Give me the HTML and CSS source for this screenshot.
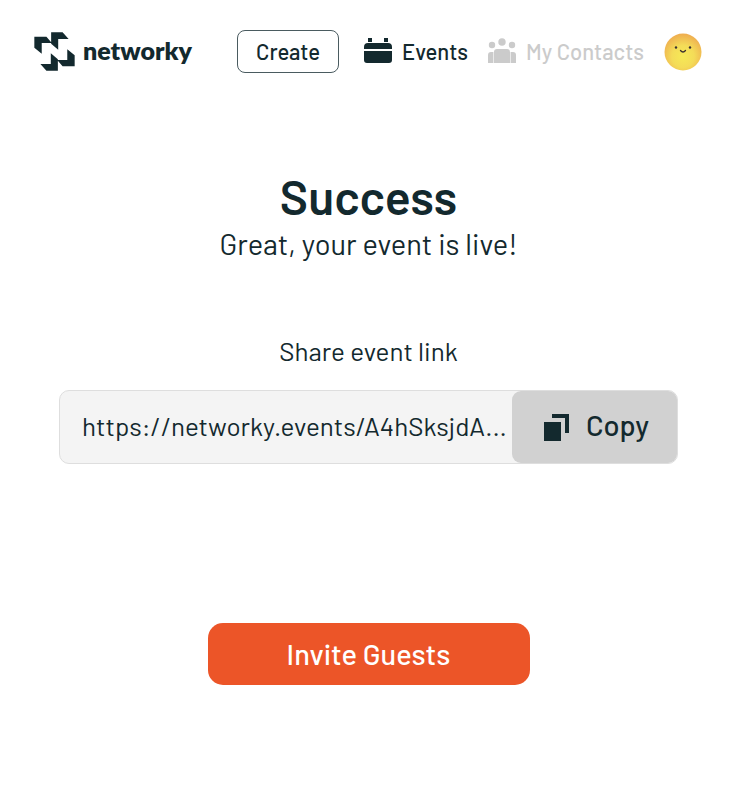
FILE: index.html
```html
<!DOCTYPE html>
<html lang="en">
<head>
<meta charset="utf-8">
<meta name="viewport" content="width=device-width, initial-scale=1">
<title>networky</title>
<link rel="stylesheet" href="styles.css">
</head>
<body>
<header class="header">
  <a class="brand" href="#">
    <svg class="brand-mark" viewBox="42 38 122 116" aria-hidden="true">
      <path d="M43 52H79L95 71H65V103L43 85ZM93 39H127L145 59H114V91L93 73ZM163 140H127L111 121H141V89L163 107ZM113 153H79L61 133H92V101L113 119Z"/>
    </svg>
    <span class="brand-name">networky</span>
  </a>
  <nav class="nav">
    <button class="create" type="button">Create</button>
    <a class="nav-link" href="#">
      <svg class="icon-events" viewBox="0 0 28 28" aria-hidden="true">
        <path d="M4 1h4v4H4zM20 1h4v4h-4zM0 12V10a4 4 0 0 1 4-4H24a4 4 0 0 1 4 4V12ZM0 14H28V23a3 3 0 0 1-3 3H3a3 3 0 0 1-3-3Z"/>
      </svg>
      <span>Events</span>
    </a>
    <a class="nav-link nav-link-muted" href="#">
      <svg class="icon-contacts" viewBox="0 0 28 26" aria-hidden="true">
        <ellipse cx="14" cy="4" rx="3.7" ry="3.8"/>
        <ellipse cx="4" cy="7" rx="3.2" ry="3.3"/>
        <ellipse cx="24" cy="7" rx="3.2" ry="3.3"/>
        <path d="M6 25V14a3 3 0 0 1 3-3H19a3 3 0 0 1 3 3V25ZM0 25V17a3 3 0 0 1 3-3H5.4V25ZM22.6 25V14H25a3 3 0 0 1 3 3V25Z"/>
      </svg>
      <span>My Contacts</span>
    </a>
    <a class="avatar" href="#" aria-label="Profile">
      <svg viewBox="0 0 38 38" aria-hidden="true">
        <defs>
          <radialGradient id="sun" cx="0.5" cy="0.62" r="0.6">
            <stop offset="0" stop-color="#f6e956"/>
            <stop offset="0.5" stop-color="#f4dc58"/>
            <stop offset="1" stop-color="#efaf50"/>
          </radialGradient>
        </defs>
        <circle cx="19" cy="19" r="18.5" fill="url(#sun)"/>
        <circle cx="12" cy="14.5" r="1.2" fill="#3b3030"/>
        <circle cx="26" cy="14.5" r="1.2" fill="#3b3030"/>
        <path d="M16.5 17.5Q19 20.5 21.5 17.5" fill="none" stroke="#3b3030" stroke-width="1.3" stroke-linecap="round"/>
      </svg>
    </a>
  </nav>
</header>
<main class="main">
  <h1 class="title">Success</h1>
  <p class="subtitle">Great, your event is live!</p>
  <label class="share-label" for="event-link">Share event link</label>
  <div class="share">
    <input class="share-input" id="event-link" type="text" value="https://networky.events/A4hSksjdA..." readonly>
    <button class="copy" type="button">
      <svg class="icon-copy" viewBox="0 0 26 28" aria-hidden="true">
        <path d="M0 9H17V28H0ZM8 1H25V20H21V5H8Z"/>
      </svg>
      <span>Copy</span>
    </button>
  </div>
  <button class="invite" type="button">Invite Guests</button>
</main>
</body>
</html>
```
FILE: styles.css
```css
* {
  box-sizing: border-box;
}

body {
  margin: 0;
  background: #fff;
  color: #13292e;
  font-family: Barlow, Roboto, sans-serif;
}

button,
input {
  color: inherit;
  font: inherit;
}

a {
  color: inherit;
  text-decoration: none;
}

svg {
  display: block;
  flex: none;
  fill: currentColor;
}

.header {
  display: flex;
  align-items: center;
  justify-content: space-between;
  padding: 30px 30px 0 34px;
}

.brand {
  display: flex;
  align-items: center;
  gap: 8px;
}

.brand-mark {
  width: 41px;
  height: 39px;
}

.brand-name {
  padding-bottom: 3px;
  font-family: Lato, sans-serif;
  font-size: 25px;
  font-weight: 800;
  line-height: 30px;
}

.nav {
  display: flex;
  align-items: center;
  gap: 20px;
  font-size: 22px;
  line-height: 28px;
  white-space: nowrap;
}

.create {
  width: 102px;
  height: 43px;
  margin-right: 5px;
  padding: 0 0 2px;
  border: 1px solid #4a5b60;
  border-radius: 8px;
  background: #fff;
  font-weight: 500;
}

.nav-link {
  display: flex;
  align-items: center;
  gap: 10px;
  padding-bottom: 2px;
  font-weight: 500;
}

.nav-link-muted {
  color: #cbcbcb;
}

.icon-events {
  width: 28px;
  height: 28px;
}

.icon-contacts {
  width: 28px;
  height: 26px;
}

.avatar svg {
  width: 38px;
  height: 38px;
}

.main {
  display: flex;
  flex-direction: column;
  align-items: center;
  padding: 94px 54px 60px 59px;
}

.title {
  margin: 0;
  font-size: 48px;
  font-weight: 600;
  line-height: 58px;
}

.subtitle {
  margin: 0;
  font-size: 29px;
  line-height: 38px;
}

.share-label {
  margin-top: 72px;
  font-size: 26px;
  line-height: 32px;
}

.share {
  display: flex;
  width: 100%;
  height: 74px;
  margin-top: 23px;
  border: 1px solid #dedede;
  border-radius: 10px;
  background: #f4f4f4;
}

.share-input {
  flex: 1;
  min-width: 0;
  padding: 0 0 4px 22px;
  border: 0;
  outline: 0;
  background: transparent;
  font-size: 26px;
}

.copy {
  display: flex;
  align-items: center;
  justify-content: center;
  gap: 16px;
  width: 165px;
  padding: 0 0 6px 4px;
  border: 0;
  border-radius: 9px;
  background: #d1d1d1;
  font-size: 29px;
  font-weight: 500;
}

.icon-copy {
  width: 26px;
  height: 28px;
  margin-top: 6px;
}

.invite {
  width: 322px;
  max-width: 100%;
  height: 62px;
  margin-top: 159px;
  padding: 0 0 2px;
  border: 0;
  border-radius: 15px;
  background: #ec5528;
  color: #fff;
  font-size: 29px;
  font-weight: 500;
}
```
